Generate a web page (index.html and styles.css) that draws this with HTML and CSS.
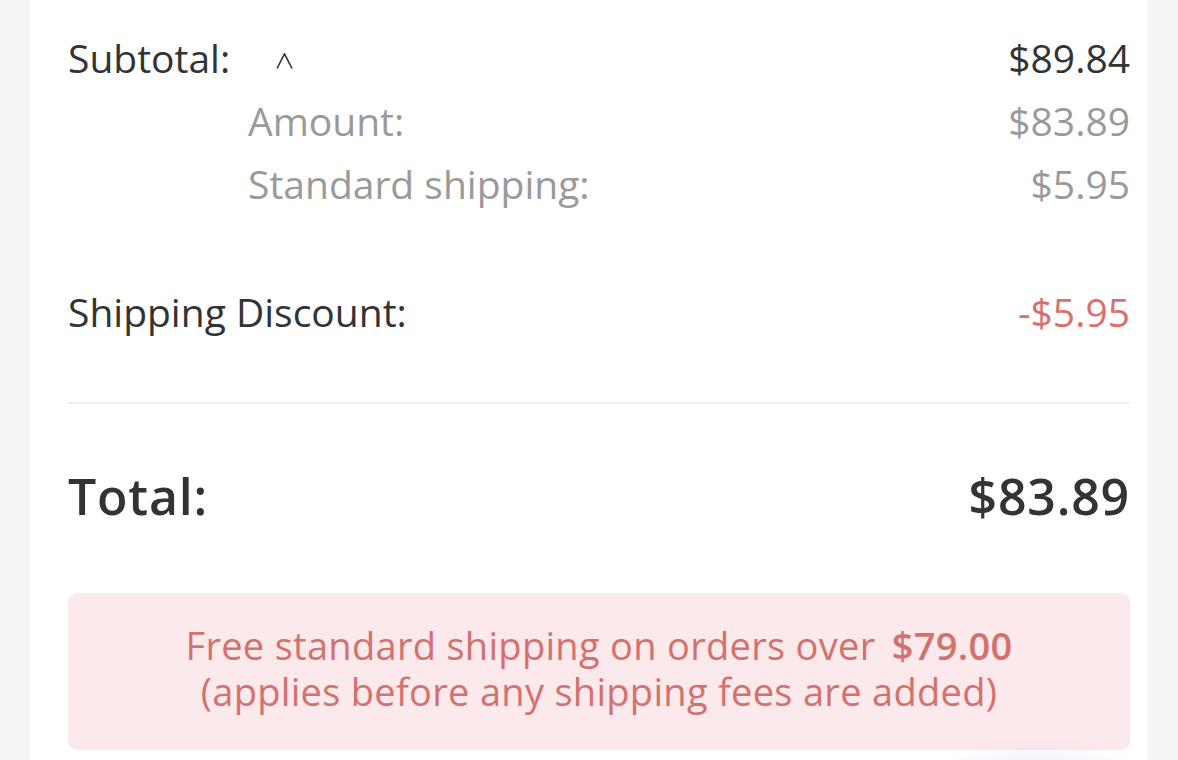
FILE: index.html
```html
<!DOCTYPE html>
<html lang="en">
<head>
<meta charset="utf-8">
<title>Order summary</title>
<link rel="stylesheet" href="styles.css">
</head>
<body>
<main class="card">
  <section class="breakdown">
    <div class="row">
      <div class="label-group">
        <span class="label">Subtotal:</span>
        <svg class="caret" width="17" height="16" viewBox="0 0 17 16" aria-hidden="true">
          <polyline points="1,15.5 8.5,0.8 16,15.5" fill="none" stroke="#333" stroke-width="1.6" stroke-linejoin="miter"/>
        </svg>
      </div>
      <span class="value">$89.84</span>
    </div>
    <div class="row sub">
      <span class="label">Amount:</span>
      <span class="value">$83.89</span>
    </div>
    <div class="row sub">
      <span class="label">Standard shipping:</span>
      <span class="value">$5.95</span>
    </div>
    <div class="row discount">
      <span class="label">Shipping Discount:</span>
      <span class="value">-$5.95</span>
    </div>
  </section>
  <hr class="divider">
  <div class="row total">
    <span class="label">Total:</span>
    <span class="value">$83.89</span>
  </div>
  <div class="notice">
    <p class="notice-line">Free standard shipping on orders over <strong>$79.00</strong></p>
    <p class="notice-line">(applies before any shipping fees are added)</p>
  </div>
  <div class="glow" aria-hidden="true"></div>
</main>
</body>
</html>
```

FILE: styles.css
```css
html, body {
  margin: 0;
  padding: 0;
}

body {
  background: #f5f5f5;
  font-family: "Open Sans", "Noto Sans", sans-serif;
  color: #333333;
  height: 760px;
  overflow: hidden;
}

.card {
  position: relative;
  margin: 0 31px 0 30px;
  background: #ffffff;
  padding: 26px 17px 0 38px;
  height: 760px;
  box-sizing: border-box;
  overflow: hidden;
}

.breakdown {
  display: flex;
  flex-direction: column;
}

.row {
  display: flex;
  justify-content: space-between;
  align-items: center;
  font-size: 39px;
  line-height: 63px;
}

.label-group {
  display: flex;
  align-items: flex-start;
}

.caret {
  margin-left: 46px;
  margin-top: 27px;
}

.row.sub {
  color: #9a9a9a;
  padding-left: 180px;
}

.row.discount {
  margin-top: 65px;
}

.row.discount .value {
  color: #d9706e;
}

.divider {
  border: 0;
  height: 2px;
  background: #eeeeee;
  margin: 59px 0 0 0;
}

.row.total {
  font-size: 50px;
  line-height: 70px;
  font-weight: 600;
  letter-spacing: 0.8px;
  margin-top: 57px;
}

.notice {
  margin-top: 62px;
  background: #fbe9eb;
  border-radius: 9px;
  padding: 29px 20px 36px;
  text-align: center;
  color: #d4716f;
  font-size: 38px;
  line-height: 46px;
  letter-spacing: 0.3px;
}

.notice-line {
  margin: 0;
  height: 46px;
}

.notice strong {
  font-weight: 600;
  margin-left: 6px;
}

.glow {
  position: absolute;
  right: 10px;
  bottom: -45px;
  width: 200px;
  height: 70px;
  border-radius: 50%;
  background: radial-gradient(ellipse at center, rgba(205, 195, 245, 0.25), rgba(205, 195, 245, 0) 70%);
  pointer-events: none;
}
```
